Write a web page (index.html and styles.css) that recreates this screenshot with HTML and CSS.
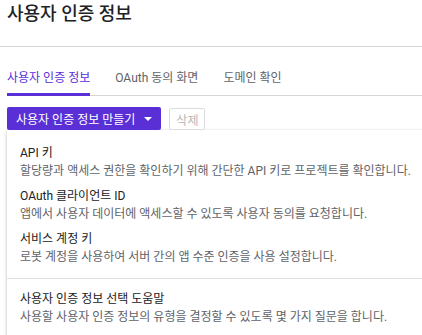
FILE: index.html
```html
<!DOCTYPE html>
<html lang="ko">
<head>
    <meta charset="utf-8">
    <link rel="stylesheet" href="styles.css">
</head>
<body>
<header class="page-title">사용자 인증 정보</header>
<nav class="tabs">
    <span class="tab active">사용자 인증 정보</span>
    <span class="tab">OAuth 동의 화면</span>
    <span class="tab">도메인 확인</span>
</nav>
<section class="actions">
    <button class="btn-create">사용자 인증 정보 만들기 <span class="caret"></span></button>
    <button class="btn-delete" disabled>삭제</button>
</section>
<div class="menu">
    <div class="menu-item">
        <div class="item-title">API 키</div>
        <div class="item-desc">할당량과 액세스 권한을 확인하기 위해 간단한 API 키로 프로젝트를 확인합니다.</div>
    </div>
    <div class="menu-item">
        <div class="item-title">OAuth 클라이언트 ID</div>
        <div class="item-desc">앱에서 사용자 데이터에 액세스할 수 있도록 사용자 동의를 요청합니다.</div>
    </div>
    <div class="menu-item">
        <div class="item-title">서비스 계정 키</div>
        <div class="item-desc">로봇 계정을 사용하여 서버 간의 앱 수준 인증을 사용 설정합니다.</div>
    </div>
    <div class="menu-divider"></div>
    <div class="menu-item">
        <div class="item-title">사용자 인증 정보 선택 도움말</div>
        <div class="item-desc">사용할 사용자 인증 정보의 유형을 결정할 수 있도록 몇 가지 질문을 합니다.</div>
    </div>
</div>
</body>
</html>
```

FILE: styles.css
```css
body {
    font-family: Roboto, "Noto Sans CJK KR", sans-serif;
    margin: 0;
    padding: 0;
    color: #202124;
    background: #fff;
    overflow: hidden;
}
.page-title {
    font-size: 18px;
    font-weight: 500;
    padding: 0 7px;
    height: 46px;
    line-height: 28px;
    border-bottom: 1px solid #d6d6d6;
}
.tabs {
    display: flex;
    gap: 25px;
    margin: 18px 0 0 7px;
    border-bottom: 1px solid #d6d6d6;
}
.tab {
    font-size: 12px;
    color: #5f6368;
    padding: 5px 0 7px;
    line-height: 16px;
    border-bottom: 3px solid transparent;
    margin-bottom: -1px;
}
.tab.active {
    color: #5b2fd8;
    border-bottom-color: #5b2fd8;
}
.actions {
    display: flex;
    gap: 8px;
    padding: 11px 7px 0;
}
.btn-create {
    font-family: inherit;
    font-size: 12px;
    color: #fff;
    background: #5a30d6;
    border: none;
    border-radius: 2px;
    height: 23px;
    padding: 0 9px;
    display: flex;
    align-items: center;
    gap: 6px;
}
.caret {
    width: 0;
    height: 0;
    border-left: 4px solid transparent;
    border-right: 4px solid transparent;
    border-top: 4px solid #fff;
    margin-left: 3px;
}
.btn-delete {
    font-family: inherit;
    font-size: 12px;
    color: #b8b8b8;
    background: #fff;
    border: 1px solid #dadce0;
    border-radius: 2px;
    height: 22px;
    padding: 0 6px;
    margin-top: 1px;
}
.menu {
    margin-left: 7px;
    width: 440px;
    background: #fff;
    box-shadow: 0 2px 4px rgba(0,0,0,0.2), 0 0 2px rgba(0,0,0,0.1);
    padding: 11px 0 8px;
}
.menu-item {
    padding: 3px 13px 4px;
}
.item-title {
    font-size: 12px;
    line-height: 18px;
    color: #202124;
}
.item-desc {
    font-size: 12px;
    line-height: 18px;
    color: #5f6368;
}
.menu-divider {
    border-top: 1px solid #e0e0e0;
    margin: 8px 0;
}
```
